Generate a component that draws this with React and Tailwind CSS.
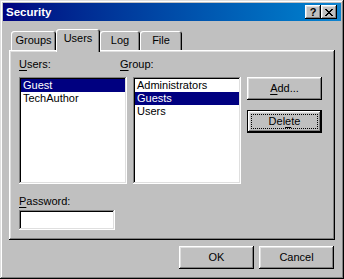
const raised = "shadow-[inset_-1px_-1px_#000,inset_1px_1px_#fff,inset_-2px_-2px_#808080,inset_2px_2px_#dfdfdf]";
const sunken = "shadow-[inset_-1px_-1px_#fff,inset_1px_1px_#808080,inset_-2px_-2px_#dfdfdf,inset_2px_2px_#000]";

function Tab({ label, selected, w }) {
  if (selected) {
    return (
      <div
        className={`relative z-10 -mb-[2px] flex h-[23px] items-start justify-center rounded-t-[3px] bg-[#c0c0c0] pt-[3px] shadow-[inset_1px_1px_#fff,inset_-1px_0_#000,inset_-2px_0_#808080] ${w}`}
      >
        {label}
      </div>
    );
  }
  return (
    <div
      className={`flex h-[19px] items-start justify-center rounded-t-[3px] pt-[3px] shadow-[inset_1px_1px_#fff,inset_-1px_0_#000,inset_-2px_0_#808080] ${w}`}
    >
      {label}
    </div>
  );
}

function ListBox({ items, selected }) {
  return (
    <div className={`flex h-[107px] w-[108px] flex-col bg-white p-[2px] ${sunken}`}>
      {items.map((it) => (
        <div
          key={it}
          className={`h-[13px] whitespace-nowrap pl-[2px] leading-[13px] ${
            it === selected ? "bg-[#000080] text-white" : "text-black"
          }`}
        >
          {it}
        </div>
      ))}
    </div>
  );
}

function Button({ children, className = "" }) {
  return (
    <div className={`flex h-[23px] w-[75px] items-center justify-center bg-[#c0c0c0] ${raised} ${className}`}>
      {children}
    </div>
  );
}

export default function App() {
  return (
    <div className="h-[279px] w-[344px] bg-[#c0c0c0] p-[3px] font-['Liberation_Sans',Arial,sans-serif] text-[11px] leading-[13px] text-black shadow-[inset_-1px_-1px_#000,inset_1px_1px_#dfdfdf,inset_-2px_-2px_#808080,inset_2px_2px_#fff]">
      {/* Title bar */}
      <div className="flex h-[18px] items-center bg-linear-to-r from-[#000080] to-[#1084d0] pl-[3px] pr-[4px]">
        <span className="flex-1 text-[11.5px] font-bold text-white">Security</span>
        <div className={`flex h-[14px] w-[16px] items-center justify-center bg-[#c0c0c0] pt-[1px] text-[11px] font-bold leading-none ${raised}`}>
          ?
        </div>
        <div className={`flex h-[14px] w-[16px] items-center justify-center bg-[#c0c0c0] ${raised}`}>
          <svg width="8" height="7" viewBox="0 0 8 7" shapeRendering="crispEdges">
            <path
              fill="#000"
              d="M0 0h2v1H0z M6 0h2v1H6z M1 1h2v1H1z M5 1h2v1H5z M2 2h4v1H2z M3 3h2v1H3z M2 4h4v1H2z M1 5h2v1H1z M5 5h2v1H5z M0 6h2v1H0z M6 6h2v1H6z"
            />
          </svg>
        </div>
      </div>

      {/* Tabs */}
      <div className="mt-[8px] flex h-[21px] items-end pl-[8px]">
        <Tab label="Groups" w="w-[45px]" />
        <Tab label="Users" w="w-[44px]" selected />
        <Tab label="Log" w="w-[40px]" />
        <Tab label="File" w="w-[42px]" />
      </div>

      {/* Tab panel */}
      <div className={`mx-[6px] flex h-[190px] flex-col pl-[10px] pt-[8px] ${raised}`}>
        <div className="flex h-[13px]">
          <span className="w-[101px]">
            <span className="underline underline-offset-[2px]">U</span>sers:
          </span>
          <span>
            <span className="underline underline-offset-[2px]">G</span>roup:
          </span>
        </div>
        <div className="mt-[6px] flex gap-[6px]">
          <ListBox items={["Guest", "TechAuthor"]} selected="Guest" />
          <ListBox items={["Administrators", "Guests", "Users"]} selected="Guests" />
          <div className="flex flex-col gap-[10px]">
            <Button>
              <span>
                <span className="underline underline-offset-[2px]">A</span>dd...
              </span>
            </Button>
            <div className="flex h-[23px] w-[75px] border border-black bg-[#c0c0c0] p-[3px] shadow-[inset_-1px_-1px_#000,inset_1px_1px_#fff,inset_-2px_-2px_#808080,inset_2px_2px_#dfdfdf]">
              <div className="flex flex-1 items-center justify-center border border-dotted border-black">
                <span>
                  Del<span className="underline underline-offset-[2px]">e</span>te
                </span>
              </div>
            </div>
          </div>
        </div>
        <div className="mt-[11px] h-[13px]">
          <span className="underline underline-offset-[2px]">P</span>assword:
        </div>
        <div className={`mt-[2px] h-[20px] w-[96px] bg-white ${sunken}`} />
      </div>

      {/* Bottom buttons */}
      <div className="mt-[6px] flex justify-end gap-[5px] pr-[7px]">
        <Button>OK</Button>
        <Button>Cancel</Button>
      </div>
    </div>
  );
}
